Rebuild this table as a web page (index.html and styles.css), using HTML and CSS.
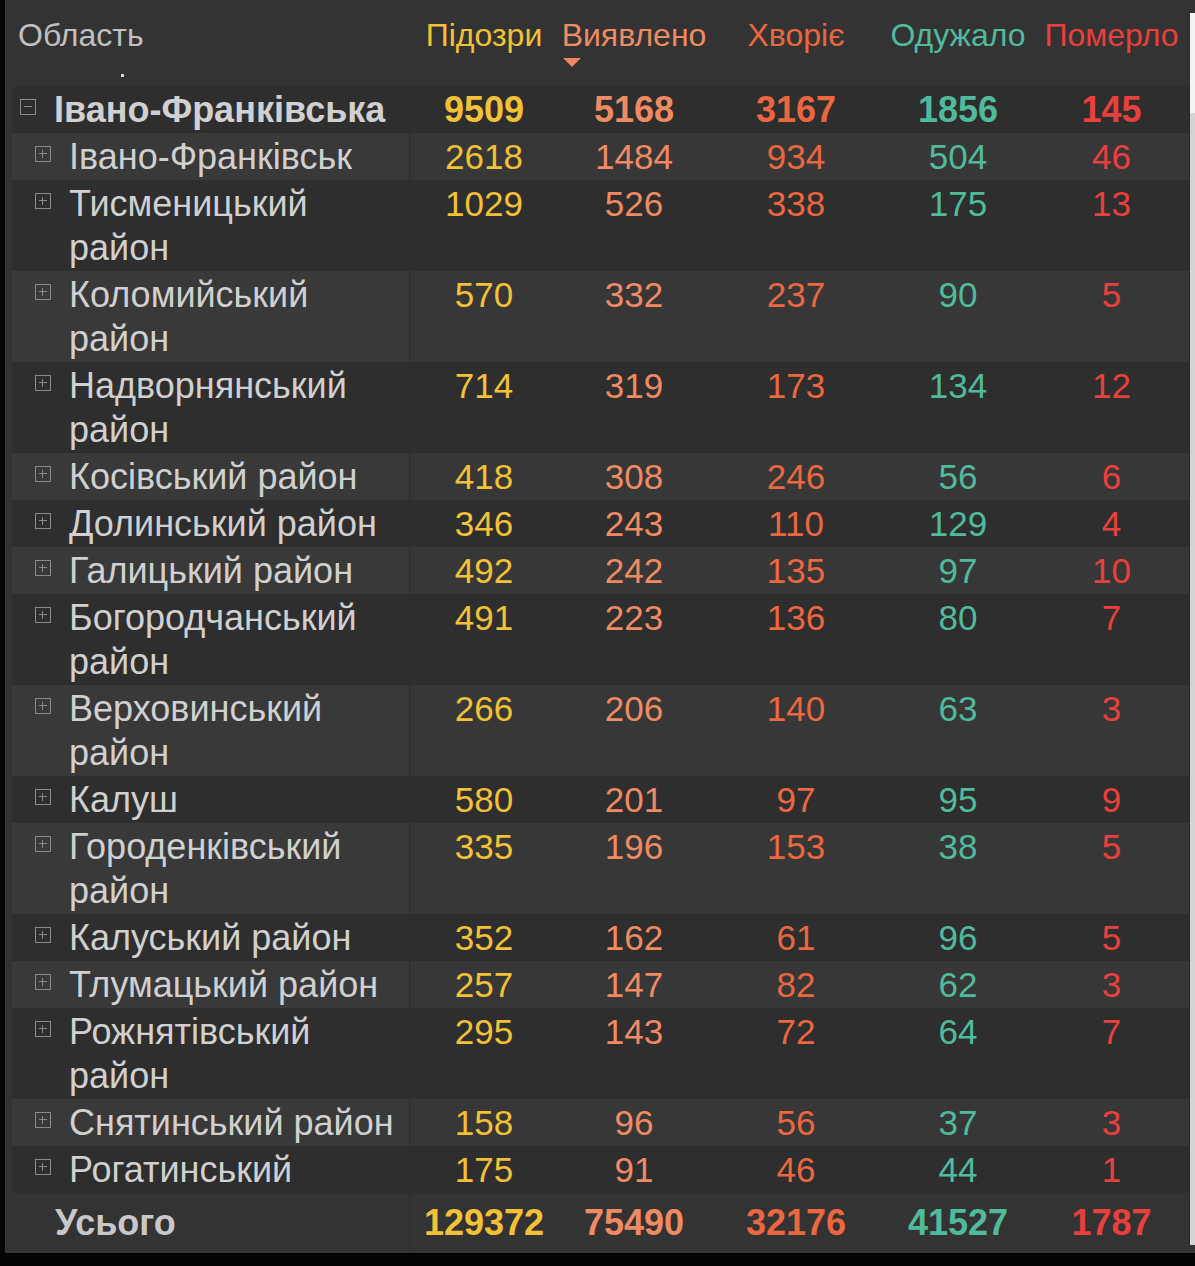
FILE: index.html
```html
<!DOCTYPE html>
<html lang="uk">
<head>
<meta charset="utf-8">
<link rel="stylesheet" href="styles.css">
</head>
<body>
<div class="screen">
  <div class="panel">
    <div class="table">
      <div class="head">
        <div class="h-name"><span>Область</span><i class="dot"></i></div>
        <div class="h c1">Підозри</div>
        <div class="h c2 sorted"><span>Виявлено</span><i class="arrow"></i></div>
        <div class="h c3">Хворіє</div>
        <div class="h c4">Одужало</div>
        <div class="h c5">Померло</div>
      </div>

      <div class="row parent dark">
        <div class="name"><i class="box minus"></i><span class="txt">Івано-Франківська</span></div>
        <div class="n c1">9509</div><div class="n c2">5168</div><div class="n c3">3167</div><div class="n c4">1856</div><div class="n c5">145</div>
      </div>
      <div class="row light">
        <div class="name"><i class="box plus"></i><span class="txt">Івано-Франківськ</span></div>
        <div class="n c1">2618</div><div class="n c2">1484</div><div class="n c3">934</div><div class="n c4">504</div><div class="n c5">46</div>
      </div>
      <div class="row dark">
        <div class="name"><i class="box plus"></i><span class="txt">Тисменицький район</span></div>
        <div class="n c1">1029</div><div class="n c2">526</div><div class="n c3">338</div><div class="n c4">175</div><div class="n c5">13</div>
      </div>
      <div class="row light">
        <div class="name"><i class="box plus"></i><span class="txt">Коломийський район</span></div>
        <div class="n c1">570</div><div class="n c2">332</div><div class="n c3">237</div><div class="n c4">90</div><div class="n c5">5</div>
      </div>
      <div class="row dark">
        <div class="name"><i class="box plus"></i><span class="txt">Надворнянський район</span></div>
        <div class="n c1">714</div><div class="n c2">319</div><div class="n c3">173</div><div class="n c4">134</div><div class="n c5">12</div>
      </div>
      <div class="row light">
        <div class="name"><i class="box plus"></i><span class="txt">Косівський район</span></div>
        <div class="n c1">418</div><div class="n c2">308</div><div class="n c3">246</div><div class="n c4">56</div><div class="n c5">6</div>
      </div>
      <div class="row dark">
        <div class="name"><i class="box plus"></i><span class="txt">Долинський район</span></div>
        <div class="n c1">346</div><div class="n c2">243</div><div class="n c3">110</div><div class="n c4">129</div><div class="n c5">4</div>
      </div>
      <div class="row light">
        <div class="name"><i class="box plus"></i><span class="txt">Галицький район</span></div>
        <div class="n c1">492</div><div class="n c2">242</div><div class="n c3">135</div><div class="n c4">97</div><div class="n c5">10</div>
      </div>
      <div class="row dark">
        <div class="name"><i class="box plus"></i><span class="txt">Богородчанський район</span></div>
        <div class="n c1">491</div><div class="n c2">223</div><div class="n c3">136</div><div class="n c4">80</div><div class="n c5">7</div>
      </div>
      <div class="row light">
        <div class="name"><i class="box plus"></i><span class="txt">Верховинський район</span></div>
        <div class="n c1">266</div><div class="n c2">206</div><div class="n c3">140</div><div class="n c4">63</div><div class="n c5">3</div>
      </div>
      <div class="row dark">
        <div class="name"><i class="box plus"></i><span class="txt">Калуш</span></div>
        <div class="n c1">580</div><div class="n c2">201</div><div class="n c3">97</div><div class="n c4">95</div><div class="n c5">9</div>
      </div>
      <div class="row light">
        <div class="name"><i class="box plus"></i><span class="txt">Городенківський район</span></div>
        <div class="n c1">335</div><div class="n c2">196</div><div class="n c3">153</div><div class="n c4">38</div><div class="n c5">5</div>
      </div>
      <div class="row dark">
        <div class="name"><i class="box plus"></i><span class="txt">Калуський район</span></div>
        <div class="n c1">352</div><div class="n c2">162</div><div class="n c3">61</div><div class="n c4">96</div><div class="n c5">5</div>
      </div>
      <div class="row light">
        <div class="name"><i class="box plus"></i><span class="txt">Тлумацький район</span></div>
        <div class="n c1">257</div><div class="n c2">147</div><div class="n c3">82</div><div class="n c4">62</div><div class="n c5">3</div>
      </div>
      <div class="row dark">
        <div class="name"><i class="box plus"></i><span class="txt">Рожнятівський район</span></div>
        <div class="n c1">295</div><div class="n c2">143</div><div class="n c3">72</div><div class="n c4">64</div><div class="n c5">7</div>
      </div>
      <div class="row light">
        <div class="name"><i class="box plus"></i><span class="txt">Снятинський район</span></div>
        <div class="n c1">158</div><div class="n c2">96</div><div class="n c3">56</div><div class="n c4">37</div><div class="n c5">3</div>
      </div>
      <div class="row dark">
        <div class="name"><i class="box plus"></i><span class="txt">Рогатинський</span></div>
        <div class="n c1">175</div><div class="n c2">91</div><div class="n c3">46</div><div class="n c4">44</div><div class="n c5">1</div>
      </div>

      <div class="row total">
        <div class="name"><span class="txt">Усього</span></div>
        <div class="n c1">129372</div><div class="n c2">75490</div><div class="n c3">32176</div><div class="n c4">41527</div><div class="n c5">1787</div>
      </div>
    </div>
    <div class="scrollbar"><div class="thumb"></div></div>
  </div>
</div>
</body>
</html>
```

FILE: styles.css
```css
* { box-sizing: border-box; }
html, body {
  margin: 0;
  padding: 0;
  background: #050505;
}
body {
  font-family: "Liberation Sans", Arial, sans-serif;
  width: 1195px;
  height: 1266px;
  overflow: hidden;
}
.screen {
  width: 1195px;
  height: 1253px;
  padding-left: 5px;
  background: #050505;
}
.panel {
  height: 100%;
  background: #333333;
  display: flex;
}
.table {
  flex: 1;
  padding-left: 7px;
  display: flex;
  flex-direction: column;
}
.head, .row {
  display: grid;
  grid-template-columns: 398px 148px 152px 172px 152px 1fr;
}
.head {
  height: 88px;
  padding-top: 13px;
  border-bottom: 1px solid #303030;
}
.h-name {
  display: flex;
  flex-direction: column;
  padding-left: 6px;
  font-size: 32px;
  line-height: 44px;
  color: #c0c0c0;
}
.dot {
  display: block;
  width: 3px;
  height: 3px;
  background: #d6d6d6;
  margin-left: 103px;
  margin-top: 17px;
}
.h {
  font-size: 32px;
  line-height: 44px;
  text-align: center;
}
.sorted {
  display: flex;
  flex-direction: column;
  align-items: center;
}
.arrow {
  display: block;
  width: 0;
  height: 0;
  border-left: 9px solid transparent;
  border-right: 9px solid transparent;
  border-top: 9px solid #ee8560;
  margin-top: 1px;
  align-self: flex-start;
  margin-left: 5px;
}
.c1 { color: #f3c136; }
.c2 { color: #ef8a63; }
.c3 { color: #ea673f; }
.c4 { color: #4fbb9c; }
.c5 { color: #e9403d; }

.row {
  padding: 2px 0 1px;
  font-size: 35px;
  line-height: 44px;
}
.row.dark { background: #2e2e2e; }
.row.light { background: #373737; }
.row.light .name { background: #393939; }
.name {
  display: flex;
  align-items: flex-start;
  color: #d0d0d0;
  padding-left: 23px;
  border-right: 1px solid #2b2b2b;
  margin: -2px 0 -1px;
  padding-top: 2px;
  padding-bottom: 1px;
  font-size: 36px;
}
.txt {
  width: 340px;
}
.n {
  text-align: center;
}
.box {
  flex: none;
  display: block;
  width: 16px;
  height: 16px;
  border: 1px solid #8a8a8a;
  margin-top: 11px;
  margin-right: 18px;
  position: relative;
}
.box::before {
  content: "";
  position: absolute;
  left: 3px;
  right: 3px;
  top: 6px;
  height: 1px;
  background: #8a8a8a;
}
.plus::after {
  content: "";
  position: absolute;
  top: 3px;
  bottom: 3px;
  left: 6px;
  width: 1px;
  background: #8a8a8a;
}
.row.parent {
  padding: 1px 0 0;
  font-weight: bold;
  font-size: 36px;
}
.row.parent .name {
  padding-left: 8px;
  margin: -1px 0 0;
  padding-top: 1px;
}
.row.parent .box {
  margin-right: 18px;
}
.row.total {
  background: #333333;
  font-weight: bold;
  font-size: 36px;
  padding: 8px 0 8px;
}
.row.total .name {
  padding-left: 43px;
  margin: -8px 0;
  padding-top: 8px;
  border-right: 1px solid #2d2d2d;
  color: #c8c8c8;
}
.scrollbar {
  width: 6px;
  margin: 13px 0 8px;
  background: #d4d4d4;
  border-left: 1px solid #2a2a2a;
}
.thumb {
  height: 100px;
  background: #f4f4f4;
}
```
